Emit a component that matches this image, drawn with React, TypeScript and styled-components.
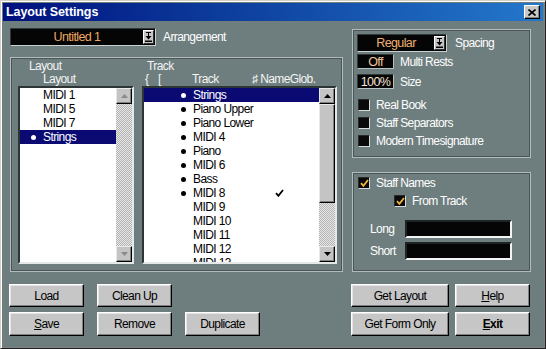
import React from "react";
import styled, { createGlobalStyle } from "styled-components";

const GlobalStyle = createGlobalStyle`
  html, body {
    margin: 0;
    padding: 0;
    background: #6e7e7e;
  }
  * {
    box-sizing: border-box;
  }
`;

const LAYOUTS = [
  { name: "MIDI 1" },
  { name: "MIDI 5" },
  { name: "MIDI 7" },
  { name: "Strings", active: true, selected: true },
];

const TRACKS = [
  { name: "Strings", active: true, selected: true },
  { name: "Piano Upper", active: true },
  { name: "Piano Lower", active: true },
  { name: "MIDI 4", active: true },
  { name: "Piano", active: true },
  { name: "MIDI 6", active: true },
  { name: "Bass", active: true },
  { name: "MIDI 8", active: true, checked: true },
  { name: "MIDI 9" },
  { name: "MIDI 10" },
  { name: "MIDI 11" },
  { name: "MIDI 12" },
  { name: "MIDI 13" },
];

const DropArrow = () => (
  <svg width="7" height="10" viewBox="0 0 7 10">
    <rect x="1" y="0" width="5" height="1" fill="#000" />
    <rect x="3" y="1" width="1" height="3" fill="#000" />
    <path d="M0.5 4h6L3.5 7.5z" fill="#000" />
    <rect x="0" y="8.5" width="7" height="1.5" fill="#000" />
  </svg>
);

const ArrowIcon = ({ down }: { down?: boolean }) => (
  <svg width="7" height="4" viewBox="0 0 7 4">
    <path d={down ? "M0 0h7L3.5 4z" : "M0 4h7L3.5 0z"} fill="currentColor" />
  </svg>
);

const Tick = ({ color }: { color: string }) => (
  <svg width="9" height="8" viewBox="0 0 9 8">
    <path d="M1 4.2 L3.4 6.8 L8 1" stroke={color} strokeWidth="1.8" fill="none" />
  </svg>
);

const App: React.FC = () => {
  return (
    <>
      <GlobalStyle />
      <Window>
        <TitleBar>
          <Title>Layout Settings</Title>
          <CloseButton>
            <svg width="8" height="7" viewBox="0 0 8 7">
              <path d="M0.5 0.5 L7.5 6.5 M7.5 0.5 L0.5 6.5" stroke="#000" strokeWidth="1.6" />
            </svg>
          </CloseButton>
        </TitleBar>

        <Body>
          <Main>
            <LeftCol>
              <LabelRow>
                <Dropdown $w={146} $color="#f0a860">
                  <DropText>Untitled 1</DropText>
                  <DropButton>
                    <DropArrow />
                  </DropButton>
                </Dropdown>
                <Label>Arrangement</Label>
              </LabelRow>

              <LeftGroup $h={215}>
                <ListColumn>
                  <ColumnHeader>
                    <HeadLine $indent={11}>Layout</HeadLine>
                    <HeadLine $indent={25}>Layout</HeadLine>
                  </ColumnHeader>
                  <ListBox>
                    <Items>
                      {LAYOUTS.map((l) => (
                        <ItemRow key={l.name} $cols="23px 1fr" $selected={l.selected}>
                          <BulletCell>{l.active && <Dot />}</BulletCell>
                          <span>{l.name}</span>
                        </ItemRow>
                      ))}
                    </Items>
                    <ScrollBar>
                      <ScrollButton $disabled>
                        <ArrowIcon />
                      </ScrollButton>
                      <ScrollTrack />
                      <ScrollButton $disabled>
                        <ArrowIcon down />
                      </ScrollButton>
                    </ScrollBar>
                  </ListBox>
                </ListColumn>

                <ListColumn>
                  <ColumnHeader>
                    <HeadLine $indent={5}>Track</HeadLine>
                    <HeadLine $indent={3}>
                      <HeadCell $w={13}>{"{"}</HeadCell>
                      <HeadCell $w={34}>[</HeadCell>
                      <HeadCell $w={60}>Track</HeadCell>
                      <HeadCell>♯ NameGlob.</HeadCell>
                    </HeadLine>
                  </ColumnHeader>
                  <ListBox>
                    <Items>
                      {TRACKS.map((t) => (
                        <ItemRow key={t.name} $cols="49px 82px 1fr" $selected={t.selected}>
                          <BulletCell>{t.active && <Dot />}</BulletCell>
                          <span>{t.name}</span>
                          <span>{t.checked && <Tick color="#000" />}</span>
                        </ItemRow>
                      ))}
                    </Items>
                    <ScrollBar>
                      <ScrollButton>
                        <ArrowIcon />
                      </ScrollButton>
                      <ScrollTrack>
                        <Thumb $h={99} />
                      </ScrollTrack>
                      <ScrollButton>
                        <ArrowIcon down />
                      </ScrollButton>
                    </ScrollBar>
                  </ListBox>
                </ListColumn>
              </LeftGroup>
            </LeftCol>

            <RightCol>
              <TopGroup $h={129}>
                <LabelRow $gap={8}>
                  <Dropdown $w={90} $color="#f0b070">
                    <DropText>Regular</DropText>
                    <DropButton>
                      <DropArrow />
                    </DropButton>
                  </Dropdown>
                  <Label>Spacing</Label>
                </LabelRow>
                <ValueRow $top={2}>
                  <ValueBox $color="#f2c49c">Off</ValueBox>
                  <Label>Multi Rests</Label>
                </ValueRow>
                <ValueRow $top={5}>
                  <ValueBox $color="#f6e4d8">100%</ValueBox>
                  <Label>Size</Label>
                </ValueRow>
                <CheckList>
                  <CheckRow>
                    <CheckBox />
                    <Label>Real Book</Label>
                  </CheckRow>
                  <CheckRow>
                    <CheckBox />
                    <Label>Staff Separators</Label>
                  </CheckRow>
                  <CheckRow>
                    <CheckBox />
                    <Label>Modern Timesignature</Label>
                  </CheckRow>
                </CheckList>
              </TopGroup>

              <BottomGroup $h={100}>
                <CheckRow>
                  <CheckBox>
                    <Tick color="#f4b43c" />
                  </CheckBox>
                  <Label>Staff Names</Label>
                </CheckRow>
                <CheckRow $indent={37}>
                  <CheckBox>
                    <Tick color="#f4b43c" />
                  </CheckBox>
                  <Label>From Track</Label>
                </CheckRow>
                <FieldRow $top={10}>
                  <FieldLabel>Long</FieldLabel>
                  <Field />
                </FieldRow>
                <FieldRow $top={4}>
                  <FieldLabel>Short</FieldLabel>
                  <Field />
                </FieldRow>
              </BottomGroup>
            </RightCol>
          </Main>

          <ButtonBar>
            <LeftButtons>
              <Button>Load</Button>
              <Button>Clean Up</Button>
              <span />
              <Button>
                <u>S</u>ave
              </Button>
              <Button>Remove</Button>
              <Button>Duplicate</Button>
            </LeftButtons>
            <RightButtons>
              <Button>Get Layout</Button>
              <Button>
                <u>H</u>elp
              </Button>
              <Button>Get Form Only</Button>
              <Button $bold>
                <u>E</u>xit
              </Button>
            </RightButtons>
          </ButtonBar>
        </Body>
      </Window>
    </>
  );
};

const Window = styled.div`
  width: 546px;
  height: 349px;
  background: #6e7e7e;
  border: 1px solid;
  border-color: #d4d0c8 #202020 #202020 #d4d0c8;
  box-shadow: inset 1px 1px 0 #ffffff, inset -1px -1px 0 #808080;
  padding: 2px;
  display: flex;
  flex-direction: column;
  overflow: hidden;
  font-family: "Liberation Sans", Arial, sans-serif;
  font-size: 12px;
  letter-spacing: -0.6px;
  color: #ffffff;
`;

const TitleBar = styled.div`
  height: 18px;
  flex: none;
  display: flex;
  align-items: center;
  justify-content: space-between;
  padding: 0 3px 0 3px;
  background: linear-gradient(90deg, #00107e 0%, #0c3c9c 40%, #2478cc 100%);
`;

const Title = styled.div`
  font-size: 12.5px;
  font-weight: bold;
  letter-spacing: -0.1px;
  color: #ffffff;
`;

const CloseButton = styled.div`
  width: 16px;
  height: 14px;
  background: #c8c8c8;
  border: 1px solid;
  border-color: #ffffff #000000 #000000 #ffffff;
  box-shadow: inset -1px -1px 0 #808080;
  display: flex;
  align-items: center;
  justify-content: center;
`;

const Body = styled.div`
  flex: 1;
  display: flex;
  flex-direction: column;
  padding: 7px 0 0 7px;
`;

const Main = styled.div`
  display: flex;
  gap: 9px;
`;

const LeftCol = styled.div`
  width: 333px;
  display: flex;
  flex-direction: column;
  gap: 11px;
`;

const RightCol = styled.div`
  width: 179px;
  display: flex;
  flex-direction: column;
  gap: 14px;
  padding-top: 1px;
`;

const LabelRow = styled.div<{ $gap?: number }>`
  height: 18px;
  display: flex;
  align-items: center;
  gap: ${(p) => p.$gap ?? 7}px;
`;

const Label = styled.span`
  color: #ffffff;
  white-space: nowrap;
`;

const Dropdown = styled.div<{ $w: number; $color: string }>`
  width: ${(p) => p.$w}px;
  height: 18px;
  background: #050505;
  border: 1px solid;
  border-color: #303838 #c8d0d0 #c8d0d0 #303838;
  display: flex;
  align-items: center;
  color: ${(p) => p.$color};
  font-size: 12.5px;
`;

const DropText = styled.span`
  flex: 1;
  text-align: center;
`;

const DropButton = styled.div`
  width: 11px;
  height: 14px;
  margin-right: 1px;
  background: #c4c4c4;
  border: 1px solid;
  border-color: #ffffff #303030 #303030 #ffffff;
  display: flex;
  align-items: center;
  justify-content: center;
`;

const GroupBox = styled.div<{ $h: number }>`
  height: ${(p) => p.$h}px;
  border: 1px solid #b2bcbc;
  box-shadow: inset 0 0 0 1px #4a5656;
`;

const LeftGroup = styled(GroupBox)`
  display: grid;
  grid-template-columns: 116px 195px;
  column-gap: 8px;
  padding: 1px 5px 0 7px;
`;

const TopGroup = styled(GroupBox)`
  display: flex;
  flex-direction: column;
  padding: 4px 0 0 4px;
`;

const BottomGroup = styled(GroupBox)`
  display: flex;
  flex-direction: column;
  padding: 1px 0 0 4px;
`;

const ListColumn = styled.div`
  display: flex;
  flex-direction: column;
`;

const ColumnHeader = styled.div`
  height: 27px;
  display: grid;
  grid-template-rows: 13px 13px;
`;

const HeadLine = styled.div<{ $indent: number }>`
  display: flex;
  align-items: center;
  padding-left: ${(p) => p.$indent}px;
  white-space: nowrap;
  color: #f4f4f4;
`;

const HeadCell = styled.span<{ $w?: number }>`
  width: ${(p) => (p.$w ? `${p.$w}px` : "auto")};
  flex: none;
`;

const ListBox = styled.div`
  height: 178px;
  display: flex;
  background: #ffffff;
  border: 2px solid;
  border-color: #2c3434 #e4e8e8 #e4e8e8 #2c3434;
  overflow: hidden;
`;

const Items = styled.div`
  flex: 1;
  overflow: hidden;
`;

const ItemRow = styled.div<{ $cols: string; $selected?: boolean }>`
  display: grid;
  grid-template-columns: ${(p) => p.$cols};
  align-items: center;
  height: 14px;
  line-height: 14px;
  white-space: nowrap;
  background: ${(p) => (p.$selected ? "#0a0a72" : "transparent")};
  color: ${(p) => (p.$selected ? "#ffffff" : "#000000")};
`;

const BulletCell = styled.span`
  display: flex;
  justify-content: flex-end;
  padding-right: 7px;
`;

const Dot = styled.span`
  width: 5px;
  height: 5px;
  border-radius: 50%;
  background: currentColor;
`;

const ScrollBar = styled.div`
  width: 16px;
  flex: none;
  display: flex;
  flex-direction: column;
`;

const ScrollButton = styled.div<{ $disabled?: boolean }>`
  height: 16px;
  flex: none;
  background: #c4c4c4;
  border: 1px solid;
  border-color: #e8e8e8 #000000 #000000 #e8e8e8;
  box-shadow: inset -1px -1px 0 #808080;
  display: flex;
  align-items: center;
  justify-content: center;
  color: ${(p) => (p.$disabled ? "#8a8a8a" : "#000000")};
`;

const ScrollTrack = styled.div`
  flex: 1;
  background-color: #d8d8d8;
  background-image: conic-gradient(#b4b4b4 25%, #e6e6e6 0 50%, #b4b4b4 0 75%, #e6e6e6 0);
  background-size: 2px 2px;
`;

const Thumb = styled.div<{ $h: number }>`
  height: ${(p) => p.$h}px;
  background: #c4c4c4;
  border: 1px solid;
  border-color: #e8e8e8 #000000 #000000 #e8e8e8;
  box-shadow: inset -1px -1px 0 #808080;
`;

const ValueRow = styled.div<{ $top: number }>`
  height: 15px;
  margin-top: ${(p) => p.$top}px;
  display: flex;
  align-items: center;
  gap: 6px;
`;

const ValueBox = styled.div<{ $color: string }>`
  width: 37px;
  height: 15px;
  background: #050505;
  border: 1px solid;
  border-color: #303838 #b8c0c0 #b8c0c0 #303838;
  color: ${(p) => p.$color};
  font-size: 12.5px;
  display: flex;
  align-items: center;
  justify-content: center;
`;

const CheckList = styled.div`
  margin-top: 7px;
  display: flex;
  flex-direction: column;
`;

const CheckRow = styled.div<{ $indent?: number }>`
  height: 18px;
  display: flex;
  align-items: center;
  gap: 6px;
  padding-left: ${(p) => p.$indent ?? 1}px;
`;

const CheckBox = styled.div`
  width: 12px;
  height: 12px;
  flex: none;
  background: #0a0a0a;
  border: 1px solid;
  border-color: #2a2a2a #d8dcdc #d8dcdc #2a2a2a;
  display: flex;
  align-items: center;
  justify-content: center;
`;

const FieldRow = styled.div<{ $top: number }>`
  height: 18px;
  margin-top: ${(p) => p.$top}px;
  display: flex;
  align-items: center;
  padding-left: 13px;
`;

const FieldLabel = styled.span`
  width: 35px;
  color: #ffffff;
`;

const Field = styled.div`
  width: 107px;
  height: 18px;
  background: #050505;
  border: 2px solid;
  border-color: #1e2424 #f4f4f4 #f4f4f4 #1e2424;
`;

const ButtonBar = styled.div`
  width: 521px;
  margin: 12px 0 0 -1px;
  display: flex;
  justify-content: space-between;
`;

const LeftButtons = styled.div`
  display: grid;
  grid-template-columns: repeat(3, 75px);
  grid-template-rows: 23px 24px;
  column-gap: 13px;
  row-gap: 5px;
`;

const RightButtons = styled.div`
  display: grid;
  grid-template-columns: 98px 75px;
  grid-template-rows: 23px 24px;
  column-gap: 6px;
  row-gap: 5px;
`;

const Button = styled.button<{ $bold?: boolean }>`
  padding: 0;
  background: #c6c6c6;
  border: 1px solid;
  border-color: #ffffff #000000 #000000 #ffffff;
  box-shadow: inset -1px -1px 0 #808080, inset 1px 1px 0 #e4e4e4;
  font-family: "Liberation Sans", Arial, sans-serif;
  font-size: 12px;
  letter-spacing: -0.6px;
  font-weight: ${(p) => (p.$bold ? "bold" : "normal")};
  color: #000000;
`;

export default App;
